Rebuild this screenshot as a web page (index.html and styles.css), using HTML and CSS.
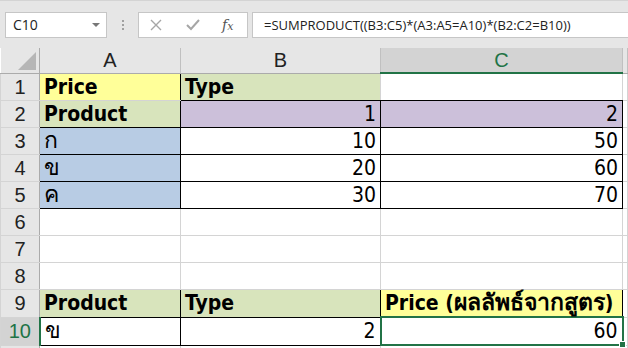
FILE: index.html
```html
<!DOCTYPE html>
<html lang="th">

<head>
    <meta charset="UTF-8">
    <title>SUMPRODUCT</title>
    <link rel="stylesheet" href="styles.css">
</head>

<body>

    <div class="top-strip">
        <div class="formula-bar">
            <div class="name-box">
                <span>C10</span>
                <span class="drop-arrow"></span>
            </div>
            <div class="grip">
                <span></span><span></span><span></span>
            </div>
            <div class="fx-box">
                <svg class="icon" width="12" height="12" viewBox="0 0 12 12">
                    <path d="M1 1 L11 11 M11 1 L1 11" stroke="#a6a6a6" stroke-width="1.4" fill="none" />
                </svg>
                <svg class="icon" width="14" height="12" viewBox="0 0 14 12">
                    <path d="M1 6 L5 10 L13 1" stroke="#a6a6a6" stroke-width="2" fill="none" />
                </svg>
                <span class="fx">f<small>x</small></span>
            </div>
            <div class="formula-input">=SUMPRODUCT((B3:C5)*(A3:A5=A10)*(B2:C2=B10))</div>
        </div>
    </div>

    <table class="sheet">
        <colgroup>
            <col class="c-head">
            <col class="c-a">
            <col class="c-b">
            <col class="c-c">
            <col>
        </colgroup>
        <thead>
            <tr>
                <th class="corner"><span class="tri"></span></th>
                <th>A</th>
                <th>B</th>
                <th class="sel-col">C</th>
                <th></th>
            </tr>
        </thead>
        <tbody>
            <tr>
                <td class="rh">1</td>
                <td class="yellow bold bt-r">Price</td>
                <td class="green bold bb">Type</td>
                <td class="bb"></td>
                <td></td>
            </tr>
            <tr>
                <td class="rh">2</td>
                <td class="green bold bx">Product</td>
                <td class="purple num bx">1</td>
                <td class="purple num bx">2</td>
                <td></td>
            </tr>
            <tr>
                <td class="rh">3</td>
                <td class="blue bx"><span class="th">ก</span></td>
                <td class="num bx">10</td>
                <td class="num bx">50</td>
                <td></td>
            </tr>
            <tr>
                <td class="rh">4</td>
                <td class="blue bx"><span class="th">ข</span></td>
                <td class="num bx">20</td>
                <td class="num bx">60</td>
                <td></td>
            </tr>
            <tr>
                <td class="rh">5</td>
                <td class="blue bx"><span class="th">ค</span></td>
                <td class="num bx">30</td>
                <td class="num bx">70</td>
                <td></td>
            </tr>
            <tr>
                <td class="rh">6</td>
                <td></td>
                <td></td>
                <td></td>
                <td></td>
            </tr>
            <tr>
                <td class="rh">7</td>
                <td></td>
                <td></td>
                <td></td>
                <td></td>
            </tr>
            <tr>
                <td class="rh">8</td>
                <td></td>
                <td></td>
                <td></td>
                <td></td>
            </tr>
            <tr>
                <td class="rh">9</td>
                <td class="green bold bx">Product</td>
                <td class="green bold bx">Type</td>
                <td class="yellow bold bx">Price (<span class="th">ผลลัพธ์จากสูตร</span>)</td>
                <td></td>
            </tr>
            <tr>
                <td class="rh sel-row">10</td>
                <td class="bx"><span class="th">ข</span></td>
                <td class="num bx">2</td>
                <td class="num bx active">60<span class="handle"></span></td>
                <td></td>
            </tr>
            <tr>
                <td class="rh"></td>
                <td></td>
                <td></td>
                <td></td>
                <td></td>
            </tr>
        </tbody>
    </table>

</body>

</html>
```

FILE: styles.css
```css
body {
    margin: 0;
    background-color: #e6e6e6;
    font-family: "DejaVu Sans Condensed", "DejaVu Sans", Tahoma, sans-serif;
    color: #000;
    overflow: hidden;
}

.top-strip {
    height: 47px;
    border-top: 1px solid #d4d4d4;
    background-color: #e6e6e6;
}

.formula-bar {
    display: flex;
    align-items: center;
    padding: 11px 0 0 5px;
    height: 25px;
}

.name-box {
    box-sizing: border-box;
    width: 102px;
    height: 26px;
    background: #fff;
    border: 1px solid #c6c6c6;
    display: flex;
    align-items: center;
    justify-content: space-between;
    padding: 0 6px 0 7px;
    font-family: "Open Sans", "Noto Sans", sans-serif;
    font-size: 14px;
    color: #222;
}

.drop-arrow {
    width: 0;
    height: 0;
    border-left: 4px solid transparent;
    border-right: 4px solid transparent;
    border-top: 4px solid #777;
}

.grip {
    width: 31px;
    display: flex;
    flex-direction: column;
    align-items: center;
    gap: 2px;
}

.grip span {
    width: 2px;
    height: 2px;
    background: #a0a0a0;
}

.fx-box {
    box-sizing: border-box;
    width: 110px;
    height: 26px;
    background: #fff;
    border: 1px solid #c6c6c6;
    display: flex;
    align-items: center;
    padding-left: 11px;
}

.fx-box .icon:first-child {
    margin-right: 24px;
}

.fx {
    margin-left: 22px;
    font-family: "DejaVu Serif", serif;
    font-style: italic;
    font-size: 14px;
    color: #555;
}

.fx small {
    font-size: 11px;
}

.formula-input {
    box-sizing: border-box;
    margin-left: 4px;
    flex: 1;
    height: 26px;
    background: #fff;
    border: 1px solid #c6c6c6;
    border-right: none;
    padding-left: 11px;
    display: flex;
    align-items: center;
    font-family: "Open Sans", "Noto Sans", sans-serif;
    font-size: 13px;
    color: #222;
}

.sheet {
    border-collapse: collapse;
    table-layout: fixed;
    width: 100%;
    background: #fff;
}

.c-head {
    width: 39px;
}

.c-a {
    width: 141px;
}

.c-b {
    width: 200px;
}

.c-c {
    width: 242px;
}

.sheet th {
    height: 24px;
    padding: 0;
    background: #e6e6e6;
    border-right: 1px solid #c0c0c0;
    border-bottom: 1px solid #ababab;
    font-family: "Liberation Sans", Arial, sans-serif;
    font-weight: normal;
    font-size: 20px;
    color: #222;
}

.sheet th.corner {
    position: relative;
    border-right: 1px solid #ababab;
}

.tri {
    position: absolute;
    right: 3px;
    bottom: 3px;
    width: 0;
    height: 0;
    border-left: 18px solid transparent;
    border-bottom: 18px solid #b6b6b6;
}

.sheet th.sel-col {
    background: #d3d3d3;
    color: #217346;
    border-bottom: 2px solid #217346;
}

.sheet td {
    height: 26px;
    padding: 0 4px;
    border: 1px solid #d4d4d4;
    font-size: 21px;
    white-space: nowrap;
    overflow: visible;
    line-height: 26px;
}

.th {
    font-size: 23px;
    line-height: 20px;
}

.sheet td.rh {
    background: #e6e6e6;
    border-right: 1px solid #ababab;
    text-align: center;
    padding: 0;
    font-family: "Liberation Sans", Arial, sans-serif;
    font-size: 20px;
    color: #222;
}

.sheet td.sel-row {
    background: #d3d3d3;
    color: #217346;
    border-right: 2px solid #217346;
}

.bold {
    font-weight: bold;
}

.num {
    text-align: right;
}

.yellow {
    background: #ffff99;
}

.green {
    background: #d8e4bc;
}

.purple {
    background: #ccc0da;
}

.blue {
    background: #b8cce4;
}

.sheet td.bx {
    border: 1px solid #000;
}

.sheet td.bt-r {
    border-right: 1px solid #000;
}

.sheet td.bb {
    border-bottom: 1px solid #000;
}

.sheet td.active {
    position: relative;
    border: 2px solid #217346;
}

.handle {
    position: absolute;
    right: -4px;
    bottom: -4px;
    width: 5px;
    height: 5px;
    background: #217346;
    border: 1px solid #fff;
}
```
